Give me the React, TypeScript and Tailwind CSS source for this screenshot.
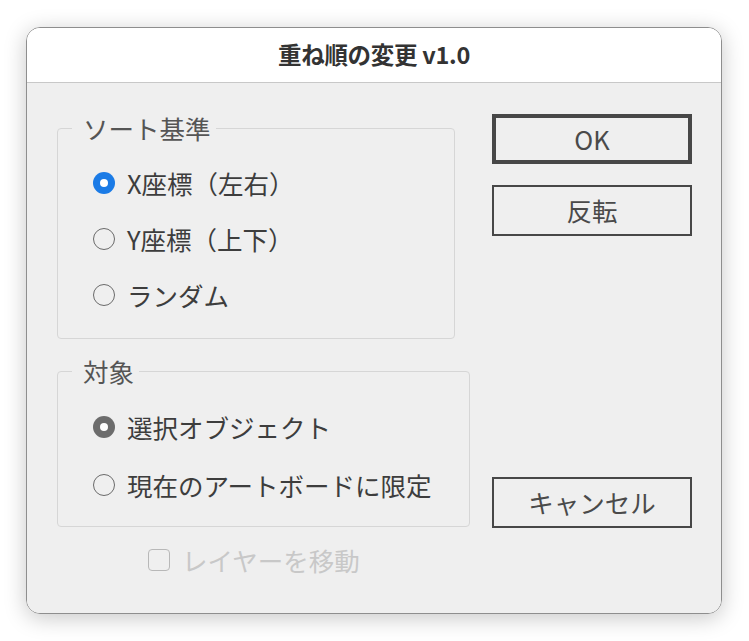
import React, { useState } from "react";

const font = { fontFamily: '"Noto Sans CJK JP", "Noto Sans", sans-serif' };

type RadioProps = {
  label: string;
  checked: boolean;
  active?: boolean;
  onSelect: () => void;
  rowClass: string;
};

const Radio = ({ label, checked, active, onSelect, rowClass }: RadioProps) => (
  <div className={`flex items-center gap-[12px] cursor-default ${rowClass}`} onClick={onSelect}>
    {checked ? (
      <span
        className={`flex h-[22px] w-[22px] items-center justify-center rounded-full ${
          active ? "bg-[#1b7be6]" : "bg-[#6c6c6c]"
        }`}
      >
        <span className="h-[8px] w-[8px] rounded-full bg-white" />
      </span>
    ) : (
      <span className="h-[22px] w-[22px] rounded-full border-[1.5px] border-[#6a6a6a]" />
    )}
    <span className="text-[25.5px] leading-none text-[#3d3d3d]">{label}</span>
  </div>
);

const Group = ({ title, className, children }: { title: string; className: string; children: React.ReactNode }) => (
  <fieldset className={`rounded-[4px] border border-[#d6d6d6] ${className}`}>
    <legend className="ml-[14px] pl-[11px] pr-[5px] text-[25.5px] leading-[36px] text-[#555555]">{title}</legend>
    {children}
  </fieldset>
);

export default function App() {
  const [sortKey, setSortKey] = useState(0);
  const [target, setTarget] = useState(0);

  return (
    <div className="min-h-[641px] w-[749px] bg-white pl-[26px] pt-[27px]" style={font}>
      <div className="h-[587px] w-[696px] overflow-hidden rounded-[14px] border border-[#8e8e8e] shadow-[0_4px_22px_rgba(0,0,0,0.22)]">
        <div className="flex h-[55px] items-center justify-center border-b border-[#c8c8c8] bg-white">
          <span className="text-[23.5px] font-bold tracking-[-0.3px] text-[#333333]">重ね順の変更 v1.0</span>
        </div>

        <div className="flex h-[530px] bg-[#efefef] pl-[30px] pr-[29px] pt-[27px]">
          <div className="flex w-[413px] flex-col">
            <Group title="ソート基準" className="h-[229px] w-[398px]">
              <div className="pl-[35px] pt-[9px]">
                <Radio label="X座標（左右）" checked={sortKey === 0} active onSelect={() => setSortKey(0)} rowClass="h-[56px]" />
                <Radio label="Y座標（上下）" checked={sortKey === 1} active onSelect={() => setSortKey(1)} rowClass="h-[56px]" />
                <Radio label="ランダム" checked={sortKey === 2} active onSelect={() => setSortKey(2)} rowClass="h-[55px]" />
              </div>
            </Group>

            <Group title="対象" className="mt-[14px] h-[174px] w-[413px]">
              <div className="pl-[35px] pt-[9px]">
                <Radio label="選択オブジェクト" checked={target === 0} onSelect={() => setTarget(0)} rowClass="h-[58px]" />
                <Radio label="現在のアートボードに限定" checked={target === 1} onSelect={() => setTarget(1)} rowClass="h-[58px]" />
              </div>
            </Group>

            <div className="ml-[91px] mt-[21px] flex h-[24px] items-center gap-[12px]">
              <span className="h-[22px] w-[22px] rounded-[4px] border-[1.5px] border-[#b8b8b8]" />
              <span className="text-[25.5px] leading-none text-[#c8c8c8]">レイヤーを移動</span>
            </div>
          </div>

          <div className="ml-[22px] flex flex-col pt-[4px]">
            <button className="h-[50px] w-[200px] border-[4px] border-[#474747] bg-[#efefef] text-[25.5px] text-[#4a4a4a]">
              OK
            </button>
            <button className="mt-[21px] h-[51px] w-[200px] border-2 border-[#474747] bg-[#efefef] text-[25.5px] text-[#4a4a4a]">
              反転
            </button>
            <button className="mt-[241px] h-[51px] w-[200px] border-2 border-[#474747] bg-[#efefef] text-[25.5px] text-[#4a4a4a]">
              キャンセル
            </button>
          </div>
        </div>
      </div>
    </div>
  );
}
